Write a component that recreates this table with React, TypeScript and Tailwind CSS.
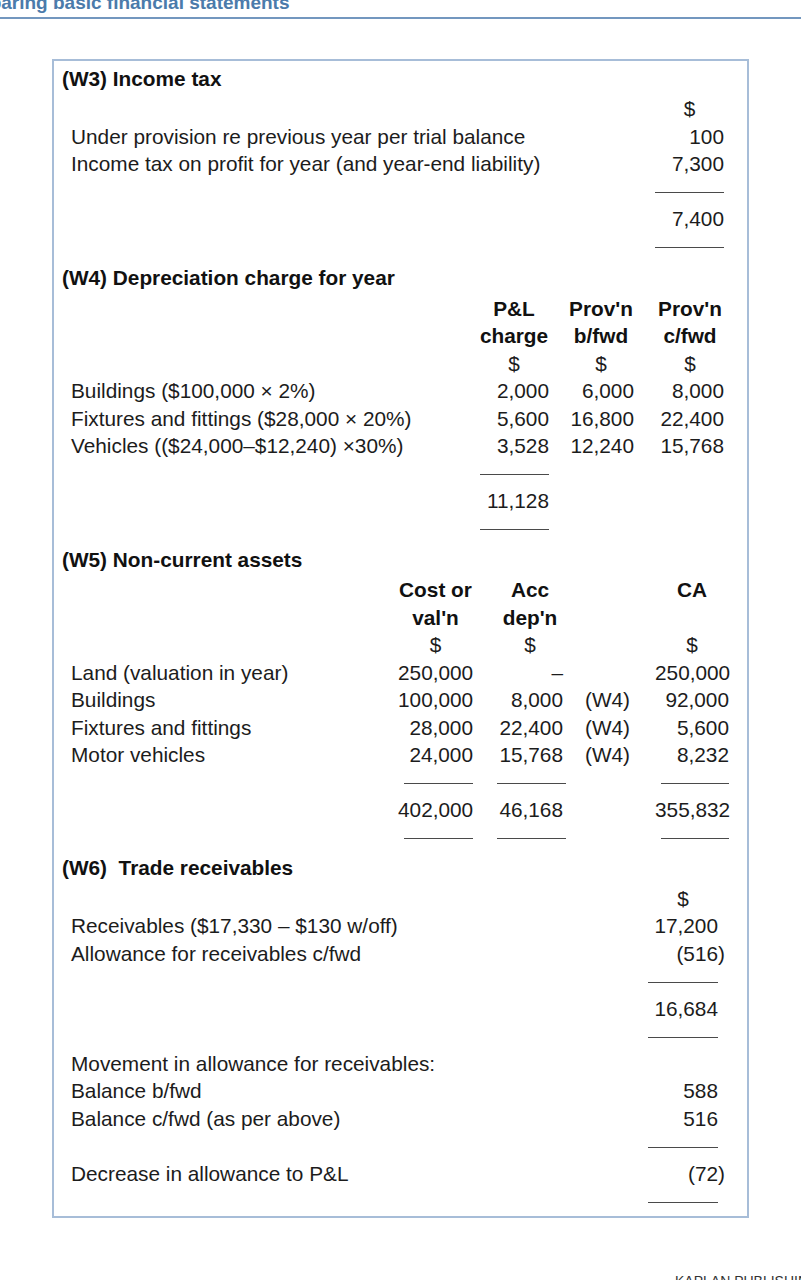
import type { ReactNode } from 'react';

const Row = ({ label, children }: { label?: ReactNode; children?: ReactNode }) => (
  <div className="flex h-[27.5px] items-center whitespace-nowrap leading-[27.5px]">
    <div className="flex-1">{label}</div>
    {children}
  </div>
);

const Rule = ({ w = 'w-[69px]' }: { w?: string }) => (
  <div className={`ml-auto mt-[3px] h-px ${w} bg-[#4a4a4a]`} />
);

const Title = ({ children }: { children: ReactNode }) => (
  <h3 className="mb-[3px] h-[27.5px] pl-[8px] font-bold leading-[27.5px] text-[#111]">{children}</h3>
);

const App = () => {
  return (
    <div className="w-[801px] overflow-hidden bg-white font-['Liberation_Sans',Arial,sans-serif] text-[#1c1c1c]">
      {/* Running header */}
      <div className="mt-[-7px] ml-[-41px] h-[19px] whitespace-nowrap text-[19px] font-bold leading-[19px] text-[#4b7bab]">
        Preparing basic financial statements
      </div>
      <div className="mt-[5px] h-[2px] w-full bg-[#7397bf]" />

      {/* Workings box */}
      <div className="mt-[40px] ml-[52px] w-[697px] border-2 border-[#a7bdd8] pt-[3.5px] pb-[1px] text-[20.8px]">
        {/* W3 */}
        <section>
          <Title>(W3) Income tax</Title>
          <div className="pl-[17px] pr-[23px]">
            <Row>
              <div className="w-[69px] text-center">$</div>
            </Row>
            <Row label="Under provision re previous year per trial balance">
              <div className="w-[69px] text-right">100</div>
            </Row>
            <Row label="Income tax on profit for year (and year-end liability)">
              <div className="w-[69px] text-right">7,300</div>
            </Row>
            <Row>
              <div className="w-[69px]"><Rule /></div>
            </Row>
            <Row>
              <div className="w-[69px] text-right">7,400</div>
            </Row>
            <Row>
              <div className="w-[69px]"><Rule /></div>
            </Row>
          </div>
        </section>

        {/* W4 */}
        <section className="mt-[4px]">
          <Title>(W4) Depreciation charge for year</Title>
          <div className="pl-[17px] pr-[23px]">
            <Row>
              <div className="w-[70px] text-center font-bold text-[#111]">P&amp;L</div>
              <div className="ml-[19px] w-[66px] text-center font-bold text-[#111]">Prov'n</div>
              <div className="ml-[22px] w-[68px] text-center font-bold text-[#111]">Prov'n</div>
            </Row>
            <Row>
              <div className="w-[70px] text-center font-bold text-[#111]">charge</div>
              <div className="ml-[19px] w-[66px] text-center font-bold text-[#111]">b/fwd</div>
              <div className="ml-[22px] w-[68px] text-center font-bold text-[#111]">c/fwd</div>
            </Row>
            <Row>
              <div className="w-[70px] text-center">$</div>
              <div className="ml-[19px] w-[66px] text-center">$</div>
              <div className="ml-[22px] w-[68px] text-center">$</div>
            </Row>
            <Row label="Buildings ($100,000 × 2%)">
              <div className="w-[70px] text-right">2,000</div>
              <div className="ml-[19px] w-[66px] text-right">6,000</div>
              <div className="ml-[22px] w-[68px] text-right">8,000</div>
            </Row>
            <Row label="Fixtures and fittings ($28,000 × 20%)">
              <div className="w-[70px] text-right">5,600</div>
              <div className="ml-[19px] w-[66px] text-right">16,800</div>
              <div className="ml-[22px] w-[68px] text-right">22,400</div>
            </Row>
            <Row label="Vehicles (($24,000–$12,240) ×30%)">
              <div className="w-[70px] text-right">3,528</div>
              <div className="ml-[19px] w-[66px] text-right">12,240</div>
              <div className="ml-[22px] w-[68px] text-right">15,768</div>
            </Row>
            <Row>
              <div className="w-[70px]"><Rule /></div>
              <div className="ml-[19px] w-[66px]" />
              <div className="ml-[22px] w-[68px]" />
            </Row>
            <Row>
              <div className="w-[70px] text-right">11,128</div>
              <div className="ml-[19px] w-[66px]" />
              <div className="ml-[22px] w-[68px]" />
            </Row>
            <Row>
              <div className="w-[70px]"><Rule /></div>
              <div className="ml-[19px] w-[66px]" />
              <div className="ml-[22px] w-[68px]" />
            </Row>
          </div>
        </section>

        {/* W5 */}
        <section className="mt-[3.5px]">
          <Title>(W5) Non-current assets</Title>
          <div className="pl-[17px] pr-[18px]">
            <Row>
              <div className="w-[75px] text-center font-bold text-[#111]">Cost or</div>
              <div className="ml-[24px] w-[66px] text-center font-bold text-[#111]">Acc</div>
              <div className="ml-[22px] w-[46px]" />
              <div className="ml-[24px] w-[74px] text-center font-bold text-[#111]">CA</div>
            </Row>
            <Row>
              <div className="w-[75px] text-center font-bold text-[#111]">val'n</div>
              <div className="ml-[24px] w-[66px] text-center font-bold text-[#111]">dep'n</div>
              <div className="ml-[22px] w-[46px]" />
              <div className="ml-[24px] w-[74px]" />
            </Row>
            <Row>
              <div className="w-[75px] text-center">$</div>
              <div className="ml-[24px] w-[66px] text-center">$</div>
              <div className="ml-[22px] w-[46px]" />
              <div className="ml-[24px] w-[74px] text-center">$</div>
            </Row>
            <Row label="Land (valuation in year)">
              <div className="w-[75px] text-right">250,000</div>
              <div className="ml-[24px] w-[66px] text-right">–</div>
              <div className="ml-[22px] w-[46px]" />
              <div className="ml-[24px] w-[74px] text-right">250,000</div>
            </Row>
            <Row label="Buildings">
              <div className="w-[75px] text-right">100,000</div>
              <div className="ml-[24px] w-[66px] text-right">8,000</div>
              <div className="ml-[22px] w-[46px]">(W4)</div>
              <div className="ml-[24px] w-[74px] text-right">92,000</div>
            </Row>
            <Row label="Fixtures and fittings">
              <div className="w-[75px] text-right">28,000</div>
              <div className="ml-[24px] w-[66px] text-right">22,400</div>
              <div className="ml-[22px] w-[46px]">(W4)</div>
              <div className="ml-[24px] w-[74px] text-right">5,600</div>
            </Row>
            <Row label="Motor vehicles">
              <div className="w-[75px] text-right">24,000</div>
              <div className="ml-[24px] w-[66px] text-right">15,768</div>
              <div className="ml-[22px] w-[46px]">(W4)</div>
              <div className="ml-[24px] w-[74px] text-right">8,232</div>
            </Row>
            <Row>
              <div className="w-[75px]"><Rule /></div>
              <div className="ml-[24px] w-[66px]"><Rule w="w-[69px]" /></div>
              <div className="ml-[22px] w-[46px]" />
              <div className="ml-[24px] w-[74px]"><Rule w="w-[68px]" /></div>
            </Row>
            <Row>
              <div className="w-[75px] text-right">402,000</div>
              <div className="ml-[24px] w-[66px] text-right">46,168</div>
              <div className="ml-[22px] w-[46px]" />
              <div className="ml-[24px] w-[74px] text-right">355,832</div>
            </Row>
            <Row>
              <div className="w-[75px]"><Rule /></div>
              <div className="ml-[24px] w-[66px]"><Rule w="w-[69px]" /></div>
              <div className="ml-[22px] w-[46px]" />
              <div className="ml-[24px] w-[74px]"><Rule w="w-[68px]" /></div>
            </Row>
          </div>
        </section>

        {/* W6 */}
        <section className="mt-[3px]">
          <Title>(W6)&nbsp; Trade receivables</Title>
          <div className="pl-[17px] pr-[29px]">
            <Row>
              <div className="w-[70px] text-center">$</div>
            </Row>
            <Row label="Receivables ($17,330 – $130 w/off)">
              <div className="w-[70px] text-right">17,200</div>
            </Row>
            <Row label="Allowance for receivables c/fwd">
              <div className="w-[70px] text-right"><span className="mr-[-7px]">(516)</span></div>
            </Row>
            <Row>
              <div className="w-[70px]"><Rule w="w-[70px]" /></div>
            </Row>
            <Row>
              <div className="w-[70px] text-right">16,684</div>
            </Row>
            <Row>
              <div className="w-[70px]"><Rule w="w-[70px]" /></div>
            </Row>
            <Row label="Movement in allowance for receivables:" />
            <Row label="Balance b/fwd">
              <div className="w-[70px] text-right">588</div>
            </Row>
            <Row label="Balance c/fwd (as per above)">
              <div className="w-[70px] text-right">516</div>
            </Row>
            <Row>
              <div className="w-[70px]"><Rule w="w-[70px]" /></div>
            </Row>
            <Row label="Decrease in allowance to P&L">
              <div className="w-[70px] text-right"><span className="mr-[-7px]">(72)</span></div>
            </Row>
            <Row>
              <div className="w-[70px]"><Rule w="w-[70px]" /></div>
            </Row>
          </div>
        </section>
      </div>

      {/* Footer */}
      <div className="mt-[56px] ml-[675px] h-[40px] whitespace-nowrap text-[14px] leading-[14px] text-[#333]">
        KAPLAN PUBLISHING
      </div>
    </div>
  );
};

export default App;
